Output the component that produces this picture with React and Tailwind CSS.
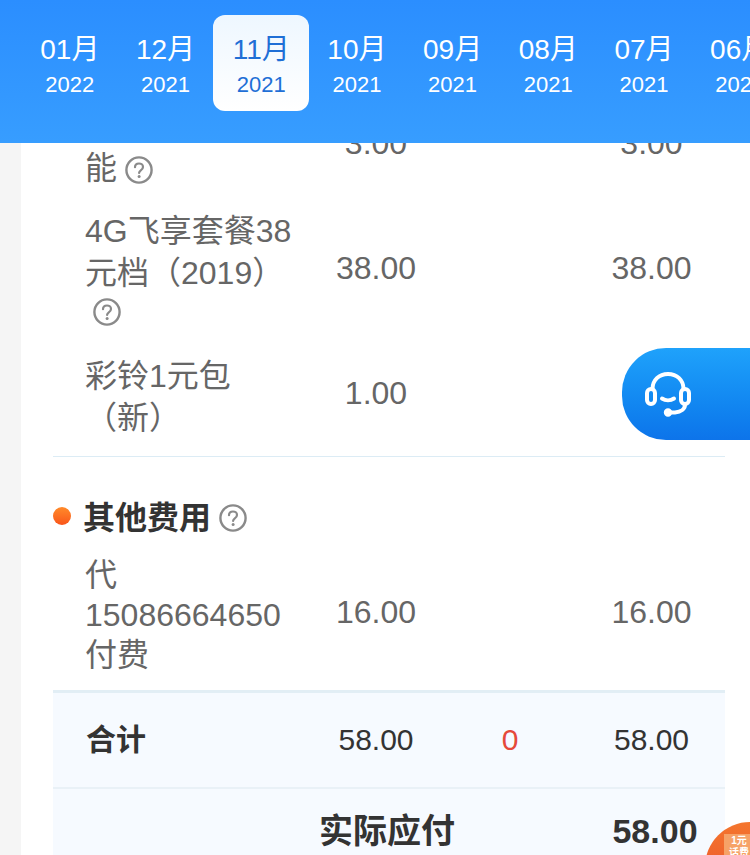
import React from 'react';

const MONTHS = [
    ['01月', '2022'],
    ['12月', '2021'],
    ['11月', '2021'],
    ['10月', '2021'],
    ['09月', '2021'],
    ['08月', '2021'],
    ['07月', '2021'],
    ['06月', '2021'],
];

const ROW = 'grid grid-cols-[257px_132px_136px_147px] items-center';

function HelpIcon({ className = '' }) {
    return (
        <svg width="28" height="28" viewBox="0 0 28 28" fill="none" className={`inline-block shrink-0 ${className}`}>
            <circle cx="14" cy="14" r="12.6" stroke="#8a8a8a" strokeWidth="2.4" />
            <path d="M10 11.2c0-2.3 1.800-3.700 4-3.700s4 1.400 4 3.500c0 1.700-1 2.500-2.200 3.300-1.100.8-1.700 1.300-1.700 2.700" stroke="#8a8a8a" strokeWidth="2.200" strokeLinecap="round" />
            <circle cx="14.100" cy="20.600" r="1.500" fill="#8a8a8a" />
        </svg>
    );
}

function HeadsetIcon() {
    return (
        <svg width="48" height="48" viewBox="0 0 48 48" fill="none" stroke="white" strokeWidth="4" strokeLinecap="round" strokeLinejoin="round">
            <path d="M8.500 19C8.500 10 15 4 24 4s15.500 6 15.500 15" />
            <rect x="3" y="19" width="8" height="15" rx="4" />
            <rect x="37" y="19" width="8" height="15" rx="4" />
            <path d="M18 28.500c3.500 2.300 8.500 2.300 12 0" />
            <path d="M41 34.500c0 4.500-4 7.500-10 8h-6" />
            <circle cx="24" cy="42.500" r="2.200" fill="white" />
        </svg>
    );
}

function MonthTab({ month, year, active }) {
    return (
        <div className={`w-[95.7px] h-[96px] shrink-0 flex flex-col items-center pt-[17px] rounded-xl ${active ? 'bg-gradient-to-b from-[#eef7ff] to-white text-[#1f6fd6]' : 'text-white'}`}>
            <div className="text-[28px] leading-[36px]">{month}</div>
            <div className="text-[22px] leading-[34px]">{year}</div>
        </div>
    );
}

function FeeRow({ name, first, third, valuePad = 'pb-[6px]', className = 'leading-[42px]' }) {
    return (
        <div className={`${ROW} py-[10px] text-[32px] text-[#666] ${className}`}>
            <div className="pl-[32px] w-[247px]">{name}</div>
            <div className={`text-center ${valuePad}`}>{first}</div>
            <div />
            <div className={`text-center ${valuePad}`}>{third}</div>
        </div>
    );
}

export default function App() {
    return (
        <div className="relative w-[750px] h-[855px] overflow-hidden flex flex-col bg-[#f5f5f5] font-['Liberation_Sans','Noto_Sans_CJK_SC',sans-serif]">
            {/* Month strip */}
            <div className="relative z-10 h-[143px] shrink-0 bg-gradient-to-b from-[#2b8eff] to-[#379dff] pt-[15px] pl-[22px] flex overflow-hidden">
                {MONTHS.map(([month, year], i) => (
                    <MonthTab key={month} month={month} year={year} active={i === 2} />
                ))}
            </div>

            {/* Bill detail */}
            <div className="flex-1 ml-[21px] bg-white pl-[32px] pr-[25px] overflow-hidden">
                <div className="-mt-[48px]">
                    <div className="pb-px">
                        <FeeRow name={<>&nbsp;<br />能<HelpIcon className="ml-[8px] align-[-5px]" /></>} first="3.00" third="3.00" valuePad="pb-[8px]" />
                    </div>
                    <FeeRow name={<>4G飞享套餐38元档（2019）<HelpIcon className="ml-[8px] align-[0px]" /></>} first="38.00" third="38.00" valuePad="pb-[10px]" />
                    <div className="-mt-px">
                        <FeeRow name="彩铃1元包（新）" first="1.00" third="" valuePad="pb-[8px]" />
                    </div>
                </div>
                <div className="h-px mt-[6.5px] bg-[#dcecf5]" />

                <div className="flex items-center h-[62px] mt-[30px] text-[32px] font-bold text-[#333]">
                    <span className="w-[18px] h-[18px] -mt-[4px] rounded-full bg-gradient-to-b from-[#ff8a2a] to-[#f9541a]" />
                    <span className="ml-[12px]">其他费用</span>
                    <span className="ml-[8px] font-normal flex"><HelpIcon /></span>
                </div>
                <div className="-mt-[4px]">
                    <FeeRow name="代15086664650付费" first="16.00" third="16.00" valuePad="pb-[6px]" className="leading-[40px]" />
                </div>

                <div className="mt-[5px] border-t-[3px] border-[#e2eef5] bg-[#f6faff]">
                    <div className={`${ROW} h-[96px] border-b-2 border-[#e9f1f7] text-[30px] text-[#333]`}>
                        <div className="pl-[33px] font-bold">合计</div>
                        <div className="text-center">58.00</div>
                        <div className="text-center text-[#e5493a]">0</div>
                        <div className="text-center">58.00</div>
                    </div>
                    <div className={`${ROW} h-[86px] text-[34px] font-bold text-[#333]`}>
                        <div />
                        <div className="whitespace-nowrap pl-[9px]">实际应付</div>
                        <div />
                        <div className="text-center pl-[7px]">58.00</div>
                    </div>
                </div>
            </div>

            {/* Floating customer service button */}
            <div className="absolute left-[622px] top-[348px] w-[128px] h-[92px] rounded-l-[44px] bg-gradient-to-b from-[#1fa2fb] to-[#0d74ea] pl-[22px] flex items-center">
                <HeadsetIcon />
            </div>

            {/* Floating promo badge */}
            <div className="absolute left-[705px] top-[822px] w-[90px] h-[90px] rounded-full bg-gradient-to-b from-[#f4762e] to-[#e8452a] pl-[19px] pt-[12px]">
                <div className="w-[30px] h-[40px] bg-[#f6a267] text-white text-[10px] leading-[12px] font-bold text-center pt-[1px]">
                    1元<br />话费
                </div>
            </div>
        </div>
    );
}
